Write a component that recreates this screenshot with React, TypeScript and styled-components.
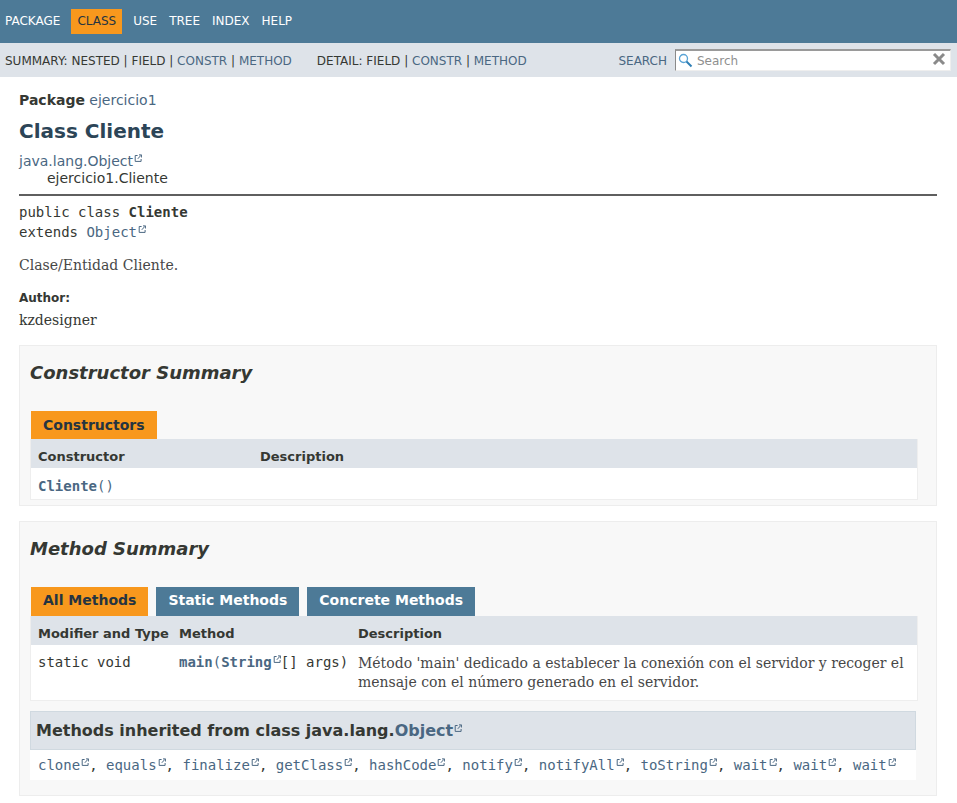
import React from "react";
import styled, { createGlobalStyle } from "styled-components";

const GlobalStyle = createGlobalStyle`
  html, body {
    margin: 0;
    padding: 0;
    background: #fff;
    color: #353833;
    font-family: "DejaVu Sans", Arial, sans-serif;
    font-size: 14px;
  }
`;

const Root = styled.div`
  width: 957px;
  height: 803px;
  overflow: hidden;
`;
const TopNav = styled.ul`
  display: flex;
  align-items: flex-start;
  height: 43px;
  margin: 0;
  padding: 9px 0 0 0;
  box-sizing: border-box;
  background: #4d7a97;
  list-style: none;
  font-size: 12px;
`;
const NavItem = styled.li<{ $active?: boolean }>`
  padding: 5px 6px;
  height: 25px;
  box-sizing: border-box;
  margin-right: ${(p) => (p.$active ? "5px" : "0")};
  margin-left: ${(p) => (p.$active ? "5px" : "0")};
  line-height: 15px;
  color: ${(p) => (p.$active ? "#253441" : "#fff")};
  background: ${(p) => (p.$active ? "#f8981d" : "transparent")};
  &:first-child {
    padding-left: 5px;
  }
`;
const SubNav = styled.div`
  display: flex;
  align-items: center;
  height: 34px;
  padding: 0 5px;
  background: #dee3e9;
  font-size: 12px;
`;
const SubGroup = styled.div`
  margin-right: 25px;
  padding-top: 1px;
  white-space: pre;
`;
const NavLink = styled.span`
  color: #4a6782;
`;
const SearchLabel = styled.span`
  margin-left: auto;
  padding-top: 1px;
  color: #4a6782;
`;
const SearchBox = styled.div`
  position: relative;
  display: flex;
  align-items: center;
  width: 276px;
  height: 22px;
  margin-left: 8px;
  margin-right: 1px;
  padding-left: 21px;
  box-sizing: border-box;
  background: #fff;
  border-style: solid;
  border-width: 2px 1px 1px 1px;
  border-color: #9a9a9a #eeeeee #eeeeee #8a8a8a;
  color: #8f8f8f;
  font-size: 12px;
`;
const SearchIcon = styled.svg`
  position: absolute;
  left: 2px;
  top: 2px;
`;
const ClearIcon = styled.svg`
  position: absolute;
  right: 4px;
  top: 1px;
`;
const Main = styled.main`
  padding: 15px 20px 0 19px;
`;
const PackageLine = styled.div`
  height: 16px;
  line-height: 16px;
  font-size: 14px;
`;
const Label = styled.b`
  font-weight: bold;
`;
const Link = styled.span`
  color: #4a6782;
`;
const Title = styled.h1`
  margin: 12px 0 10px;
  font-size: 20px;
  line-height: 23px;
  font-weight: bold;
  color: #2c4557;
`;
const Tree = styled.div`
  font-size: 14px;
  line-height: 17px;
`;
const TreeChild = styled.div`
  padding-left: 28px;
`;
const Rule = styled.hr`
  margin: 7px 0 6px;
  border: none;
  border-top: 2px solid #5f5f5f;
  height: 0;
`;
const Mono = styled.div`
  font-family: "DejaVu Sans Mono", monospace;
  font-size: 14px;
  line-height: 20px;
`;
const Serif = styled.div`
  font-family: "DejaVu Serif", Georgia, serif;
  font-size: 14px;
  line-height: 17px;
`;
const Intro = styled(Serif)`
  margin-top: 15px;
  color: #474747;
`;
const AuthorLabel = styled.div`
  margin-top: 17px;
  font-size: 12px;
  font-weight: bold;
  line-height: 14px;
`;
const AuthorName = styled(Serif)`
  margin-top: 7px;
  color: #353833;
`;
const Section = styled.section<{ $first?: boolean; $last?: boolean }>`
  margin-top: ${(p) => (p.$first ? "16px" : "15px")};
  padding: 0 18px ${(p) => (p.$last ? "15px" : "5px")} 10px;
  background: #f8f8f8;
  border: 1px solid #ededed;
`;
const SectionTitle = styled.h2`
  margin: 16px 0 28px;
  font-size: 18px;
  line-height: 21px;
  font-style: italic;
  font-weight: bold;
`;
const Tabs = styled.div`
  display: flex;
  gap: 8px;
  padding-left: 1px;
`;
const Tab = styled.div<{ $active?: boolean; $short?: boolean }>`
  height: ${(p) => (p.$short ? "28px" : "29px")};
  padding: 0 12px;
  line-height: ${(p) => (p.$short ? "28px" : "27px")};
  font-weight: bold;
  font-size: 14px;
  color: ${(p) => (p.$active ? "#253441" : "#fff")};
  background: ${(p) => (p.$active ? "#f8981d" : "#4d7a97")};
`;
const Table = styled.div<{ $cols: string }>`
  display: grid;
  grid-template-columns: ${(p) => p.$cols};
  background: #fff;
  border-right: 1px solid #eee;
  border-bottom: 1px solid #eee;
  border-left: 1px solid #eee;
`;
const HeadCell = styled.div`
  height: 29px;
  padding: 0 0 0 7px;
  background: #dee3e9;
  font-size: 13px;
  font-weight: bold;
  line-height: 36px;
  white-space: nowrap;
`;
const Cell = styled.div<{ $low?: boolean }>`
  padding: ${(p) => (p.$low ? "10px 0 5px 7px" : "9px 0 6px 7px")};
  min-height: 31px;
  box-sizing: border-box;
  font-family: "DejaVu Sans Mono", monospace;
  font-size: 14px;
  line-height: 16px;
  white-space: nowrap;
`;
const DescCell = styled(Cell)`
  padding: 9px 8px 8px 7px;
  font-family: "DejaVu Serif", Georgia, serif;
  color: #474747;
  line-height: 19px;
  white-space: normal;
`;
const CodeLink = styled.span`
  color: #4a6782;
`;
const CodeStrong = styled.b`
  color: #4a6782;
`;
const InheritedTitle = styled.h3`
  margin: 10px 2px 0 0;
  padding: 9px 5px 9px 5px;
  height: 39px;
  box-sizing: border-box;
  background: #dee3e9;
  border: 1px solid #d0d9e0;
  font-size: 16px;
  line-height: 19px;
  font-weight: bold;
`;
const InheritedList = styled.div`
  margin-right: 2px;
  padding: 6px 8px 6px 8px;
  background: #fff;
  font-family: "DejaVu Sans Mono", monospace;
  font-size: 14px;
  line-height: 18px;
  white-space: pre;
`;

const ExternalMark = styled.svg`
  display: inline-block;
  width: 9px;
  height: 9px;
  vertical-align: 4px;
`;

// small "opens elsewhere" mark that javadoc puts after JDK links
const External = () => (
  <ExternalMark viewBox="0 0 9 9" fill="none" stroke="currentColor">
    <path d="M4.6 2.5H2.2V8.4H8.1V6" strokeWidth="1" />
    <path d="M4.8 5.8L7.9 2.4M6 1.9H8.6V4.5" strokeWidth="1" />
  </ExternalMark>
);

const Ext = ({ children }: { children: React.ReactNode }) => (
  <CodeLink>
    {children}
    <External />
  </CodeLink>
);

const inherited = [
  "clone",
  "equals",
  "finalize",
  "getClass",
  "hashCode",
  "notify",
  "notifyAll",
  "toString",
  "wait",
  "wait",
  "wait",
];

const App = () => {
  return (
    <Root>
      <GlobalStyle />
      <TopNav>
        <NavItem>PACKAGE</NavItem>
        <NavItem $active>CLASS</NavItem>
        <NavItem>USE</NavItem>
        <NavItem>TREE</NavItem>
        <NavItem>INDEX</NavItem>
        <NavItem>HELP</NavItem>
      </TopNav>
      <SubNav>
        <SubGroup>
          SUMMARY: NESTED | FIELD | <NavLink>CONSTR</NavLink> | <NavLink>METHOD</NavLink>
        </SubGroup>
        <SubGroup>
          DETAIL: FIELD | <NavLink>CONSTR</NavLink> | <NavLink>METHOD</NavLink>
        </SubGroup>
        <SearchLabel>SEARCH</SearchLabel>
        <SearchBox>
          <SearchIcon width="15" height="15" viewBox="0 0 15 15" fill="none">
            <circle cx="5.5" cy="5.5" r="4" stroke="#5aa4d6" strokeWidth="1.3" />
            <path d="M8.5 8.5L13.5 13.5" stroke="#2f7fb5" strokeWidth="2" />
          </SearchIcon>
          Search
          <ClearIcon width="14" height="14" viewBox="0 0 14 14">
            <path d="M2 2L12 12M12 2L2 12" stroke="#8a8a8a" strokeWidth="3" />
          </ClearIcon>
        </SearchBox>
      </SubNav>
      <Main>
        <PackageLine>
          <Label>Package</Label> <Link>ejercicio1</Link>
        </PackageLine>
        <Title>Class Cliente</Title>
        <Tree>
          <Ext>java.lang.Object</Ext>
          <TreeChild>ejercicio1.Cliente</TreeChild>
        </Tree>
        <Rule />
        <Mono>
          public class <b>Cliente</b>
        </Mono>
        <Mono>
          extends <Ext>Object</Ext>
        </Mono>
        <Intro>Clase/Entidad Cliente.</Intro>
        <AuthorLabel>Author:</AuthorLabel>
        <AuthorName>kzdesigner</AuthorName>

        <Section $first>
          <SectionTitle>Constructor Summary</SectionTitle>
          <Tabs>
            <Tab $active $short>
              Constructors
            </Tab>
          </Tabs>
          <Table $cols="222px 1fr">
            <HeadCell>Constructor</HeadCell>
            <HeadCell>Description</HeadCell>
            <Cell $low>
              <CodeStrong>Cliente</CodeStrong>
              <CodeLink>()</CodeLink>
            </Cell>
            <Cell />
          </Table>
        </Section>

        <Section $last>
          <SectionTitle>Method Summary</SectionTitle>
          <Tabs>
            <Tab $active>All Methods</Tab>
            <Tab>Static Methods</Tab>
            <Tab>Concrete Methods</Tab>
          </Tabs>
          <Table $cols="141px 179px 1fr">
            <HeadCell>Modifier and Type</HeadCell>
            <HeadCell>Method</HeadCell>
            <HeadCell>Description</HeadCell>
            <Cell>static void</Cell>
            <Cell>
              <CodeStrong>main</CodeStrong>
              <CodeLink>(</CodeLink>
              <CodeStrong>
                String
                <External />
              </CodeStrong>
              [] args)
            </Cell>
            <DescCell>
              Método 'main' dedicado a establecer la conexión con el servidor y recoger el mensaje con el
              número generado en el servidor.
            </DescCell>
          </Table>
          <InheritedTitle>
            Methods inherited from class java.lang.<CodeLink>Object</CodeLink>
            <CodeLink>
              <External />
            </CodeLink>
          </InheritedTitle>
          <InheritedList>
            {inherited.map((name, i) => (
              <React.Fragment key={i}>
                <Ext>{name}</Ext>
                {i < inherited.length - 1 ? ", " : ""}
              </React.Fragment>
            ))}
          </InheritedList>
        </Section>
      </Main>
    </Root>
  );
};

export default App;
